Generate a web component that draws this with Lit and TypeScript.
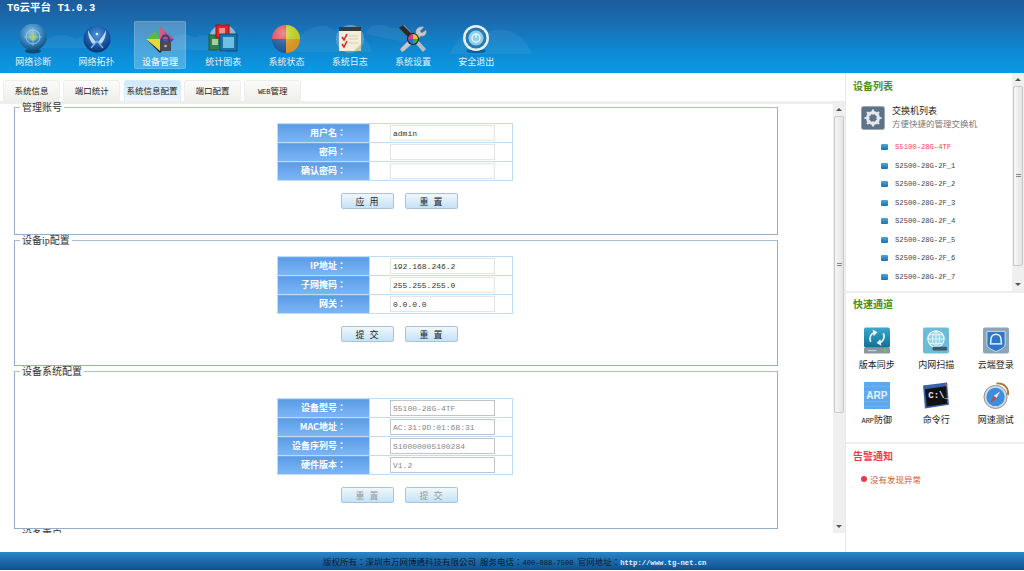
import { LitElement, html, css, svg } from 'lit';
import { customElement } from 'lit/decorators.js';

const icons: Record<string, any> = {
  diag: svg`<defs><radialGradient id="d1" cx=".45" cy=".35" r=".7"><stop offset="0" stop-color="#8fc4e4"/><stop offset=".6" stop-color="#2f7fb8"/><stop offset="1" stop-color="#10446f"/></radialGradient></defs>
    <ellipse cx="15" cy="27" rx="8" ry="2.5" fill="#0d4a78"/><circle cx="15" cy="13" r="13.500" fill="url(#d1)"/>
    <circle cx="15" cy="13" r="7" fill="none" stroke="#a8d4e8" stroke-width=".8"/><circle cx="15" cy="13" r="3.5" fill="#9fc95a"/>
    <path d="M15 4v18M6 13h18" stroke="#a8d4e8" stroke-width=".6"/>`,
  topo: svg`<defs><radialGradient id="t1" cx=".5" cy=".35" r=".7"><stop offset="0" stop-color="#4a96dc"/><stop offset=".65" stop-color="#14509c"/><stop offset="1" stop-color="#072a60"/></radialGradient></defs>
    <circle cx="15" cy="15" r="13.500" fill="url(#t1)"/>
    <path d="M14 18C11 14 8 11 6 6c0 6 2 11 5 14zM16 18c3-4 6-7 8-12 0 6-2 11-5 14z" fill="#c4dcf2"/>
    <path d="M15 17l-6 7M15 17l6 7" stroke="#86b4e0" stroke-width="1.400"/><circle cx="15" cy="10" r="1.300" fill="#e8f4fc"/>`,
  mgmt: svg`<path d="M15 3L1 15h14z" fill="#5ab84a"/><path d="M15 3l14 12H15z" fill="#b84aa8"/><path d="M15 3l-5 4 5 8z" fill="#3fa8a0"/><path d="M15 3l5 4-5 8z" fill="#d85a80"/>
    <path d="M1 15l14 12V15z" fill="#e8d83a"/><path d="M29 15L15 27V15z" fill="#3a52b8"/><path d="M1 15l14 12 14-12-14 14z" fill="#222"/>
    <path d="M17 18v-3a3.500 3.500 0 0 1 7 0v3" fill="none" stroke="#444" stroke-width="1.800"/><rect x="15" y="18" width="11" height="9" rx="1" fill="#4a4a4a"/><circle cx="20.500" cy="22" r="1.300" fill="#bbb"/>`,
  chart: svg`<circle cx="15" cy="14" r="13.500" fill="#8fb8d4"/><rect x="1" y="11" width="13" height="15" fill="#2f7f4f" stroke="#1c5a36"/><rect x="4" y="15" width="6" height="6" fill="#9fd0a8"/>
    <rect x="8" y="1" width="13" height="13" fill="#d8262a" stroke="#8e1416"/><rect x="11" y="4" width="6" height="6" fill="#f09090"/>
    <rect x="12" y="10" width="17" height="17" fill="#1a72a8" stroke="#0d4a78"/><rect x="15" y="13" width="11" height="11" fill="#6cc0e6"/>`,
  pie: svg`<defs><radialGradient id="p1" cx=".4" cy=".3" r=".8"><stop offset="0" stop-color="#fff" stop-opacity=".3"/><stop offset="1" stop-color="#000" stop-opacity=".12"/></radialGradient></defs>
    <path d="M15 15V1a14 14 0 0 1 14 14z" fill="#d2e21c"/><path d="M15 15h14a14 14 0 0 1-14 14z" fill="#f6a41c"/><path d="M15 15v14A14 14 0 0 1 1 15z" fill="#1c5ea8"/><path d="M15 15H1A14 14 0 0 1 15 1z" fill="#ee5a62"/><circle cx="15" cy="15" r="14" fill="url(#p1)"/>`,
  log: svg`<circle cx="15" cy="15" r="14" fill="#5a9cc8"/><rect x="4" y="3" width="22" height="24" rx="1" fill="#f4eed8"/><rect x="4" y="3" width="22" height="4" fill="#3a3a3a"/>
    <path d="M7 13l2 3 3-6M7 20l2 3 3-6" fill="none" stroke="#d8262a" stroke-width="1.600"/><path d="M14 12h9M14 15h9M14 19h9" stroke="#d8ceb0"/><path d="M26 20l-7 7h6l1-1z" fill="#d0c6a6"/>`,
  tool: svg`<path d="M3 3l3-2 22 24-3 3z" fill="#b8bcc0"/><path d="M1 4l4-3 10 10-4 3z" fill="#2a2a2a"/>
    <path d="M26 3l-4 4 2 2 4-3c1 3-1 7-5 6L6 27a2 2 0 0 1-3-3l15-15c-1-4 3-7 8-6z" fill="#c4c8cc" stroke="#8a8e92" stroke-width=".5"/>
    <circle cx="15" cy="15" r="6" fill="#1c1c1c"/><path d="M15 15v-5a5 5 0 0 1 5 5z" fill="#e8c81c"/><path d="M15 15h5a5 5 0 0 1-5 5z" fill="#3aa84a"/><path d="M15 15v5a5 5 0 0 1-5-5z" fill="#2a6ad0"/><path d="M15 15h-5a5 5 0 0 1 5-5z" fill="#d83a8a"/>`,
  exit: svg`<ellipse cx="15" cy="27" rx="10" ry="2" fill="#0b5f9c"/><circle cx="15" cy="14" r="13" fill="#e8f0f4"/><circle cx="15" cy="14" r="10.500" fill="#2a78b0"/><circle cx="15" cy="14" r="7.500" fill="#8ed0ea"/>
    <circle cx="15" cy="14" r="4" fill="none" stroke="#e4f4fa" stroke-width="1.400"/><path d="M15 9v5" stroke="#e4f4fa" stroke-width="1.200"/>`,
  gear: svg`<rect x=".5" y=".5" width="23" height="23" rx="2" fill="#5e7388" stroke="#9aa8b4"/>
    <circle cx="12" cy="12" r="5.500" fill="none" stroke="#e4e8ec" stroke-width="3"/><path d="M12 3.500v17M3.500 12h17M6 6l12 12M18 6L6 18" stroke="#e4e8ec" stroke-width="2.200"/><circle cx="12" cy="12" r="3.500" fill="#5e7388"/>`,
  sync: svg`<defs><linearGradient id="s1" x1="0" y1="0" x2="0" y2="1"><stop offset="0" stop-color="#3aa8cc"/><stop offset="1" stop-color="#0f6f96"/></linearGradient></defs>
    <rect width="27" height="21" rx="2" fill="url(#s1)"/><rect y="21" width="27" height="6" rx="1" fill="#8c969e"/><circle cx="22" cy="24" r="1.300" fill="#6ed04a"/><path d="M4 24h9" stroke="#d4dade"/>
    <path d="M7 15a7 7 0 0 1 4-10" fill="none" stroke="#e8f4f8" stroke-width="1.800"/><path d="M9 2l5 3-4 4z" fill="#e8f4f8"/>
    <path d="M20 6a7 7 0 0 1-4 10" fill="none" stroke="#e8f4f8" stroke-width="1.800"/><path d="M18 19l-5-3 4-4z" fill="#e8f4f8"/>`,
  scan: svg`<rect width="27" height="27" rx="2" fill="#6cbcd8"/><circle cx="13.500" cy="12" r="8.500" fill="#8ed4e6" stroke="#eef8fb" stroke-width="1.200"/>
    <path d="M5 12h17M13.500 3.500v17M6.500 7.500h14M6.500 16.500h14M13.500 3.500c-5 5-5 12 0 17M13.500 3.500c5 5 5 12 0 17" fill="none" stroke="#eef8fb" stroke-width=".9"/><rect x="10" y="20" width="15" height="4" rx="1.500" fill="#3e5864"/>`,
  cloud: svg`<rect width="27" height="27" rx="2" fill="#8aa4b8"/><path d="M4 4h19v13c0 4-5 6-9.500 8C9 23 4 21 4 17z" fill="#2f78c8" stroke="#cfe2f2"/>
    <path d="M8 16c0-6 1-9 5.500-9s5.500 3 5.500 9" fill="none" stroke="#e8f2fa" stroke-width="1.500"/><path d="M7 17h13" stroke="#e8f2fa" stroke-width="1.500"/>`,
  cmd: svg`<path d="M0 3l25-3 2 23-25 4z" fill="#3a62a8"/><path d="M2 7l22-3 1 18-21 3z" fill="#111"/><circle cx="24" cy="2.500" r="1.200" fill="#d84a3a"/>`,
  speed: svg`<path d="M14 1c8-1 13 5 12 12" fill="none" stroke="#a87838" stroke-width="2"/><circle cx="13" cy="15" r="12" fill="#d4d8dc" stroke="#8a9096"/><circle cx="13" cy="15" r="9.500" fill="#3e8ee0"/>
    <path d="M18 9l-4 7-3-2z" fill="#e8e8e8"/><path d="M8 21l3-7 3 2z" fill="#e03a2a"/>`,
};

const navs = [
  ['diag', '网络诊断'], ['topo', '网络拓扑'], ['mgmt', '设备管理'], ['chart', '统计图表'],
  ['pie', '系统状态'], ['log', '系统日志'], ['tool', '系统设置'], ['exit', '安全退出'],
];
const tabs = ['系统信息', '端口统计', '系统信息配置', '端口配置', 'WEB管理'];
const devices = ['S5100-28G-4TF', 'S2500-28G-2F_1', 'S2500-28G-2F_2', 'S2500-28G-2F_3', 'S2500-28G-2F_4', 'S2500-28G-2F_5', 'S2500-28G-2F_6', 'S2500-28G-2F_7'];
const quick = [['sync', '版本同步'], ['scan', '内网扫描'], ['cloud', '云端登录'], ['arp', 'ARP防御'], ['cmd', '命令行'], ['speed', '网速测试']];

interface Group {
  title: string;
  top: number;
  height: number;
  disabled?: boolean;
  rows: [string, string][];
  buttons: [string, string];
}

const groups: Group[] = [
  { title: '管理账号', top: 10, height: 134, rows: [['用户名：', 'admin'], ['密码：', ''], ['确认密码：', '']], buttons: ['应 用', '重 置'] },
  { title: '设备ip配置', top: 9, height: 132, rows: [['IP地址：', '192.168.246.2'], ['子网掩码：', '255.255.255.0'], ['网关：', '0.0.0.0']], buttons: ['提 交', '重 置'] },
  { title: '设备系统配置', top: 21, height: 164, disabled: true, rows: [['设备型号：', 'S5100-28G-4TF'], ['MAC地址：', 'AC:31:9D:01:6B:31'], ['设备序列号：', 'S10000005100284'], ['硬件版本：', 'V1.2']], buttons: ['重 置', '提 交'] },
];

@customElement('app-root')
class AppRoot extends LitElement {
  static styles = css`
    :host {
      display: flex;
      flex-direction: column;
      width: 1024px;
      height: 571px;
      overflow: hidden;
      background: #fff;
      font-family: "Liberation Mono", "Noto Sans CJK SC", monospace;
      font-size: 9px;
      color: #333;
    }
    header {
      position: relative;
      height: 73px;
      flex: none;
      background: linear-gradient(#1c5c9c 0, #1b6cb0 30%, #0f86cf 65%, #0a9ae4 100%);
      overflow: hidden;
    }
    .clouds { position: absolute; left: 0; top: 0; }
    .title {
      position: relative;
      height: 19px;
      padding: 2px 0 0 7px;
      box-sizing: border-box;
      color: #fff;
      font-size: 10.5px;
      line-height: 13px;
      font-weight: bold;
    }
    nav {
      position: relative;
      display: flex;
      padding: 2px 0 0 7.3px;
    }
    .nav-item {
      width: 52px;
      height: 48px;
      margin-right: 11.3px;
      flex: none;
      display: flex;
      flex-direction: column;
      align-items: center;
      padding-top: 3px;
      box-sizing: border-box;
      color: #e2f2fc;
      font-size: 9px;
      line-height: 12px;
      border-radius: 2px;
      font-family: "Noto Sans CJK SC", sans-serif;
    }
    .nav-item svg { margin-bottom: 2px; }
    .nav-item.active {
      background: rgba(255, 255, 255, .25);
      box-shadow: inset 0 0 0 1px rgba(255, 255, 255, .15);
      color: #fff;
    }
    main { flex: 1; display: flex; min-height: 0; }
    .left { width: 845px; flex: none; display: flex; flex-direction: column; }
    .tabs {
      height: 28px;
      flex: none;
      display: flex;
      align-items: flex-end;
      gap: 3.3px;
      padding-left: 3px;
    }
    .tab {
      width: 57px;
      height: 21px;
      box-sizing: border-box;
      border: 1px solid #eee;
      border-bottom: 0;
      border-radius: 3px 3px 0 0;
      background: linear-gradient(#fbfbf9, #eeeeea);
      font-family: "Noto Sans CJK SC", sans-serif;
      font-size: 8.5px;
      line-height: 18px;
      text-align: center;
      color: #222;
      white-space: nowrap;
    }
    .tab.on { background: linear-gradient(#cfe8fa, #eef7fd); border-color: #d8ebf8; }
    .tab .latin { font-family: "Liberation Mono", monospace; font-size: 7px; }
    .panel {
      height: 432px;
      flex: none;
      display: flex;
      overflow: hidden;
      background: linear-gradient(#eeeeee 3px, #fff 3px);
    }
    .scroll { flex: 1; min-width: 0; padding-left: 14px; }
    fieldset {
      box-sizing: border-box;
      width: 764px;
      margin: 0 0 -1px;
      padding: 0;
      border: 1px solid #93aecb;
      border-top-color: #a7bed6;
      font-family: "Noto Sans CJK SC", sans-serif;
    }
    legend {
      margin-left: 5px;
      padding: 0 2px;
      font-size: 10px;
      line-height: 12px;
      color: #333;
    }
    .latin-inline { font-family: "Liberation Serif", serif; }
    table {
      border-collapse: collapse;
      width: 236px;
      margin: 0 auto;
      border: 1px solid #bcdcf8;
      transform: translateX(-1px);
    }
    td { padding: 0; height: 18px; border: 1px solid #bcdcf8; }
    .lab {
      width: 92px;
      box-sizing: border-box;
      padding-right: 23px;
      text-align: right;
      color: #fff;
      font-family: "Noto Sans CJK TC", "Noto Sans CJK SC", sans-serif;
      font-weight: bold;
      font-size: 9px;
      line-height: 12px;
      white-space: nowrap;
      background: linear-gradient(#5a9ce6, #7db6f6);
    }
    .val { padding-left: 20px; }
    input {
      display: block;
      box-sizing: border-box;
      width: 105px;
      height: 16px;
      margin: 0;
      padding: 0 2px;
      border: 1px solid #e4e4e4;
      background: #fff;
      font: 8px "Liberation Mono", monospace;
      color: #333;
      outline: none;
    }
    input:disabled { border-color: #c4c4c4; color: #888; background: #fff; }
    .btns { display: flex; justify-content: center; gap: 11px; margin-top: 12px; transform: translateX(3px); }
    button {
      width: 53px;
      height: 16px;
      padding: 0;
      border: 1px solid #a9c4da;
      border-radius: 2px;
      background: linear-gradient(#f0f7fc, #c4e2f8);
      font: 9px "Noto Sans CJK SC", sans-serif;
      word-spacing: 3px;
      color: #222;
    }
    .disabled button { color: #999; }
    .bar {
      flex: none;
      width: 12px;
      display: flex;
      flex-direction: column;
      background: #efefef;
    }
    .panel .bar { margin-top: 2px; height: 430px; }
    .arrow { height: 13px; flex: none; display: flex; align-items: center; justify-content: center; }
    .arrow i { width: 0; height: 0; border: 3px solid transparent; border-top: 0; border-bottom: 3px solid #555; }
    .arrow.down i { border-bottom: 0; border-top: 3px solid #555; }
    .thumb {
      flex: none;
      box-sizing: border-box;
      margin: 0 1px;
      border: 1px solid #c9c9c9;
      border-radius: 2px;
      background: linear-gradient(90deg, #f6f6f6, #e4e4e4);
      display: flex;
      align-items: center;
      justify-content: center;
    }
    .thumb i { width: 5px; height: 4px; background: repeating-linear-gradient(#888 0 1px, transparent 1px 2px); }
    .spacer { flex: 1; }
    aside {
      flex: 1;
      border-left: 1px solid #e8e8e8;
      display: flex;
      flex-direction: column;
      min-width: 0;
      font-family: "Noto Sans CJK SC", sans-serif;
    }
    .dev-box { height: 218px; flex: none; display: flex; border-bottom: 2px solid #eeeeee; }
    .dev-main { flex: 1; min-width: 0; padding: 6px 0 0 7px; }
    h3 { margin: 0; font-size: 10px; line-height: 14px; font-weight: bold; color: #46901e; }
    h3.red { color: #f0394c; }
    .sw { display: flex; gap: 7px; margin: 13px 0 8px 8px; align-items: flex-start; }
    .sw div { margin-top: -2px; }
    .sw b { display: block; font-weight: normal; font-size: 9px; line-height: 13px; color: #222; }
    .sw span { display: block; font-size: 8.5px; line-height: 12px; color: #777; }
    .dev {
      display: flex;
      align-items: center;
      gap: 7px;
      height: 18.5px;
      padding-left: 28px;
      font: 7.2px "Liberation Mono", monospace;
      color: #444;
    }
    .dev.on { color: #f04050; }
    .dev i { width: 7px; height: 6px; border-radius: 1px; background: linear-gradient(#4aa8e4, #1a70b0); }
    .bar.side { height: 218px; }
    .quick { height: 151px; flex: none; box-sizing: border-box; padding: 4px 0 0 7px; border-bottom: 2px solid #eeeeee; }
    .grid { display: grid; grid-template-columns: repeat(3, 59.5px); grid-auto-rows: 54.5px; margin: 16px 0 0 -6px; }
    .q { display: flex; flex-direction: column; align-items: center; font-size: 9px; line-height: 11px; color: #222; }
    .q svg { display: block; }
    .q > svg, .q .tile, .q .cmd { margin-bottom: 5px; }
    .q .small { font: 7px "Liberation Mono", monospace; }
    .tile {
      width: 26px;
      height: 27px;
      display: flex;
      align-items: center;
      justify-content: center;
      background: #5ea8ee repeating-linear-gradient(#5ea8ee 0 4px, #6cb0f0 4px 5px);
      border-radius: 1px;
      color: #e4f2fc;
      font: bold 10px "Liberation Sans", sans-serif;
    }
    .cmd { position: relative; }
    .cmd em { position: absolute; left: 5px; top: 9px; color: #eee; font: bold 9px "Liberation Mono", monospace; }
    .alert { padding: 5px 0 0 7px; }
    .alert p { margin: 10px 0 0 8px; display: flex; align-items: center; gap: 3px; font-size: 8.5px; line-height: 12px; color: #c8603a; }
    .alert p i { width: 6px; height: 6px; border-radius: 50%; background: #e83a48; }
    footer {
      height: 18px;
      flex: none;
      margin-bottom: 1px;
      padding-left: 323px;
      background: linear-gradient(#2c86c6, #1a68aa 55%, #11508e);
      font-family: "Noto Sans CJK TC", "Noto Sans CJK SC", sans-serif;
      font-size: 8.5px;
      line-height: 18px;
      color: #0d1a2a;
      white-space: nowrap;
    }
    footer .gap { margin-left: 4px; }
    footer .tel { font: 7.1px "Liberation Mono", monospace; }
    footer .url { font: bold 7.2px "Liberation Mono", monospace; color: #e6f4fc; }
  `;

  bar(thumb: number, cls = '') {
    return html`<div class="bar ${cls}">
      <div class="arrow"><i></i></div>
      <div class="thumb" style="height:${thumb}px"><i></i></div>
      <div class="spacer"></div>
      <div class="arrow down"><i></i></div>
    </div>`;
  }

  renderGroup(g: Group) {
    const legend = g.title.includes('ip')
      ? html`设备<span class="latin-inline">ip</span>配置`
      : g.title;
    return html`<fieldset class=${g.disabled ? 'disabled' : ''} style="height:${g.height}px">
      <legend>${legend}</legend>
      <table style="margin-top:${g.top}px">
        ${g.rows.map(([label, value]) => html`<tr>
          <td class="lab">${label}</td>
          <td class="val"><input .value=${value} ?disabled=${g.disabled} /></td>
        </tr>`)}
      </table>
      <div class="btns">
        ${g.buttons.map((b) => html`<button>${b}</button>`)}
      </div>
    </fieldset>`;
  }

  renderQuick(icon: string, label: string) {
    if (icon === 'arp') {
      return html`<div class="q"><div class="tile">ARP</div><span><span class="small">ARP</span>防御</span></div>`;
    }
    if (icon === 'cmd') {
      return html`<div class="q"><div class="cmd"><svg width="26" height="27" viewBox="0 0 27 27">${icons.cmd}</svg><em>C:\\_</em></div><span>${label}</span></div>`;
    }
    return html`<div class="q"><svg width="26" height="27" viewBox="0 0 27 27">${icons[icon]}</svg><span>${label}</span></div>`;
  }

  render() {
    return html`
      <header>
        <svg class="clouds" width="1024" height="73" fill="#fff" fill-opacity=".06">
          <path d="M40 48c8-14 24-16 36-9 10-6 22-2 26 9z" />
          <path d="M165 50c4-14 18-20 30-12 8-6 22-4 26 12z" />
          <path d="M290 52c4-18 30-34 44-22 14-4 32 2 38 22z" />
          <path d="M365 34c4-10 18-12 26-6 12-2 22 8 14 14z" />
          <path d="M450 54c6-16 22-28 38-22 14-6 34-2 44 22z" />
        </svg>
        <div class="title">TG云平台 T1.0.3</div>
        <nav>
          ${navs.map(([icon, label], i) => html`<div class="nav-item ${i === 2 ? 'active' : ''}">
            <svg width="30" height="30" viewBox="0 0 30 30">${icons[icon]}</svg><span>${label}</span>
          </div>`)}
        </nav>
      </header>
      <main>
        <div class="left">
          <div class="tabs">
            ${tabs.map((t, i) => html`<div class="tab ${i === 2 ? 'on' : ''}">${t.startsWith('WEB') ? html`<span class="latin">WEB</span>管理` : t}</div>`)}
          </div>
          <div class="panel">
            <div class="scroll">
              ${groups.map((g) => this.renderGroup(g))}
              <fieldset style="height:40px"><legend>设备重启</legend></fieldset>
            </div>
            ${this.bar(297)}
          </div>
        </div>
        <aside>
          <div class="dev-box">
            <div class="dev-main">
              <h3>设备列表</h3>
              <div class="sw">
                <svg width="24" height="24" viewBox="0 0 24 24">${icons.gear}</svg>
                <div><b>交换机列表</b><span>方便快捷的管理交换机</span></div>
              </div>
              ${devices.map((d, i) => html`<div class="dev ${i === 0 ? 'on' : ''}"><i></i>${d}</div>`)}
            </div>
            ${this.bar(180, 'side')}
          </div>
          <div class="quick">
            <h3>快速通道</h3>
            <div class="grid">
              ${quick.map(([icon, label]) => this.renderQuick(icon, label))}
            </div>
          </div>
          <div class="alert">
            <h3 class="red">告警通知</h3>
            <p><i></i>没有发现异常</p>
          </div>
        </aside>
      </main>
      <footer>版权所有：深圳市万网博通科技有限公司<span class="gap">服务电话：</span><span class="tel">400-088-7500</span><span class="gap">官网地址：</span><span class="url">http://www.tg-net.cn</span></footer>
    `;
  }
}
